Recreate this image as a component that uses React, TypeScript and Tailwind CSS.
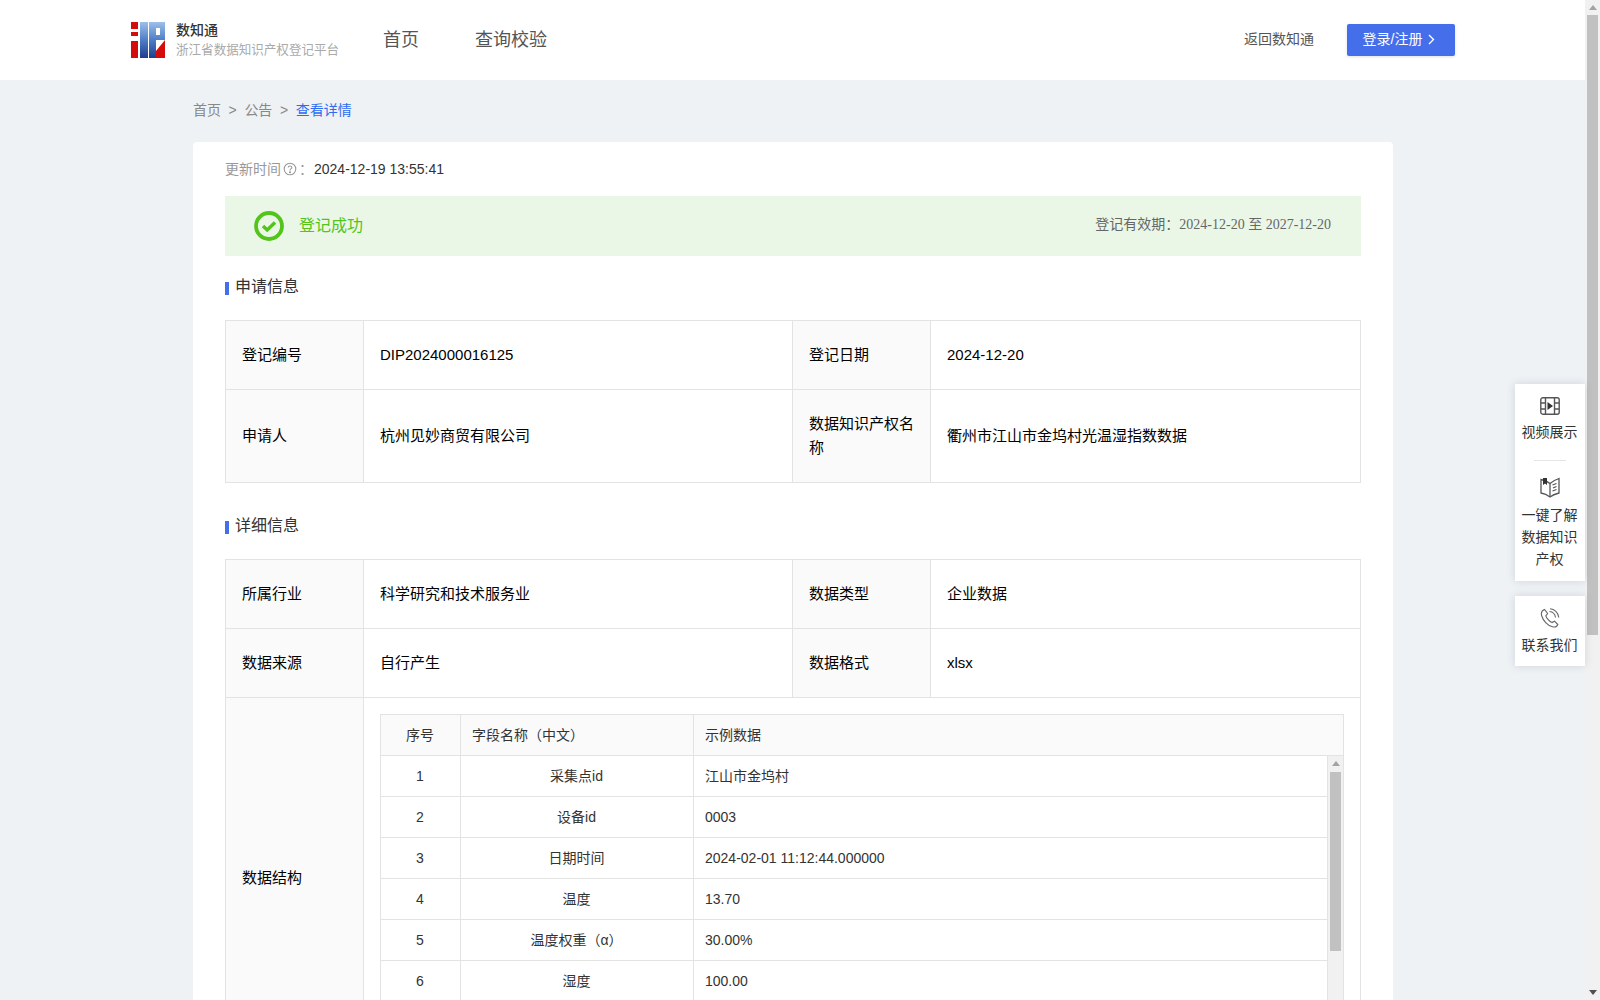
import React from "react";

const font = { fontFamily: '"Liberation Sans", "Noto Sans CJK SC", sans-serif' };

function Logo() {
  return (
    <svg width="34" height="36" viewBox="0 0 34 36" className="shrink-0">
      <defs>
        <linearGradient id="lg" x1="0" y1="0" x2="0" y2="1">
          <stop offset="0" stopColor="#9dc0ea" />
          <stop offset="0.5" stopColor="#4f7ec6" />
          <stop offset="1" stopColor="#1f3d8c" />
        </linearGradient>
      </defs>
      <rect x="0" y="0" width="7" height="7" fill="#d40c0c" />
      <rect x="0" y="10" width="7" height="4" fill="#d40c0c" />
      <rect x="0" y="19" width="7" height="17" fill="#d40c0c" />
      <rect x="9" y="0" width="8" height="36" fill="url(#lg)" />
      <path d="M18 0 H34 V18 H25 V36 H18 Z" fill="url(#lg)" />
      <rect x="25" y="6" width="4" height="7" fill="#fff" />
      <path d="M25 36 V29 L34 18 V36 Z" fill="#d40c0c" />
    </svg>
  );
}

function SectionTitle({ children, className = "" }: { children: React.ReactNode; className?: string }) {
  return (
    <div className={`flex items-center gap-[6px] h-5 text-[16px] text-[#333] ${className}`}>
      <span className="w-1 h-[13px] mt-[3px] bg-[#456eeb]" />
      <span>{children}</span>
    </div>
  );
}

const labelCls = "bg-[#fafafa] border border-[#e3e3e3] px-4 py-0 text-[15px] text-black leading-6 font-normal text-left align-middle";
const valueCls = "bg-white border border-[#e3e3e3] px-4 py-0 text-[15px] text-black leading-6 font-normal text-left align-middle";

function OuterCols() {
  return (
    <colgroup>
      <col className="w-[138px]" />
      <col className="w-[429px]" />
      <col className="w-[138px]" />
      <col />
    </colgroup>
  );
}

const rows: [string, string, string][] = [
  ["1", "采集点id", "江山市金坞村"],
  ["2", "设备id", "0003"],
  ["3", "日期时间", "2024-02-01 11:12:44.000000"],
  ["4", "温度", "13.70"],
  ["5", "温度权重（α）", "30.00%"],
  ["6", "湿度", "100.00"],
];

function InnerTable() {
  return (
    <div className="border border-[#e3e3e3] border-b-0 text-[14px] text-[#333]">
      <div className="flex h-[41px] bg-[#fafafa] border-b border-[#e3e3e3]">
        <div className="w-[80px] shrink-0 border-r border-[#e3e3e3] flex items-center justify-center pr-[1px]">序号</div>
        <div className="w-[233px] shrink-0 border-r border-[#e3e3e3] flex items-center px-[11px]">字段名称（中文）</div>
        <div className="flex-1 flex items-center px-[11px]">示例数据</div>
      </div>
      <div className="flex h-[286px] overflow-hidden">
        <div className="flex-1 min-w-0 border-r border-[#e3e3e3]">
          {rows.map((r) => (
            <div key={r[0]} className="flex h-[41px] border-b border-[#e3e3e3]">
              <div className="w-[80px] shrink-0 border-r border-[#e3e3e3] flex items-center justify-center pr-[1px]">{r[0]}</div>
              <div className="w-[233px] shrink-0 border-r border-[#e3e3e3] flex items-center justify-center pr-[1px]">{r[1]}</div>
              <div className="flex-1 flex items-center px-[11px]">{r[2]}</div>
            </div>
          ))}
        </div>
        <Scrollbar thumbTop="mt-[1px]" thumbH="h-[179px]" width="w-[15px]" thumbInset="mx-[2px]" />
      </div>
    </div>
  );
}

function Scrollbar({ thumbTop, thumbH, width, thumbInset }: { thumbTop: string; thumbH: string; width: string; thumbInset: string }) {
  return (
    <div className={`${width} shrink-0 bg-[#f1f1f1] flex flex-col items-center`}>
      <div className="h-[15px] w-full flex items-center justify-center shrink-0">
        <svg width="8" height="5" viewBox="0 0 8 5"><path d="M4 0 L8 5 H0 Z" fill="#a3a3a3" /></svg>
      </div>
      <div className={`${thumbH} ${thumbTop} self-stretch ${thumbInset} bg-[#c1c1c1]`} />
    </div>
  );
}

function SidePanel() {
  const cardCls = "w-[70px] bg-white shadow-[0_0_8px_rgba(70,80,100,0.18)] flex flex-col items-center text-[14px] leading-[22px] text-[#333] text-center pr-[1px]";
  return (
    <div className="absolute right-[15px] top-[384px] flex flex-col gap-[15px]">
      <div className={`${cardCls} pt-[13px] pb-[11px]`}>
        <svg width="20" height="18" viewBox="0 0 20 18" fill="none" stroke="#555" strokeWidth="1.4">
          <rect x="0.8" y="0.8" width="18.4" height="16.4" rx="2" />
          <path d="M5.5 1V17M14.5 1V17M1 6H5.5M1 12H5.5M14.5 6H19M14.5 12H19" />
          <path d="M7.5 5 L13 9 L7.5 13 Z" fill="#333" stroke="none" />
        </svg>
        <div className="mt-[6px]">视频展示</div>
        <div className="w-8 h-px bg-[#e5e5e5] mt-[17px]" />
        <svg className="mt-[16px]" width="20" height="21" viewBox="0 0 20 21" fill="none" stroke="#555" strokeWidth="1.3">
          <path d="M1 2.5 C4 3 7 4 10 6.5 C13 4 16 2.5 19 1.5 V16 C15 17 12.5 18 10 20 C7.5 18 4.5 16.5 1 16 Z" />
          <path d="M10 6.5V20" />
          <path d="M3 1 H7 V8 L5 6.4 L3 8 Z" fill="#333" stroke="none" />
          <path d="M12.5 8 L16.5 6.5M13 11 L16.5 9.5M12.5 14 L16.5 12.5" />
        </svg>
        <div className="mt-[6px] px-1">一键了解数据知识产权</div>
      </div>
      <div className={`${cardCls} pt-[12px] pb-[10px]`}>
        <svg width="20" height="20" viewBox="0 0 20 20" fill="none" stroke="#666" strokeWidth="1.1">
          <path d="M4.5 1.5 C2 2.5 0.8 4.5 1.6 7.5 C3 12.5 7.5 17.5 12.5 18.8 C15 19.4 17 18.5 17.8 16.5 L14.5 13.2 L12 14.6 C9.5 13.5 6.5 10 5.8 7.8 L7.6 5.5 Z" />
          <path d="M9.5 3.5 C12.5 3.8 15 6 15.5 9.5M10 0.8 C14.5 1 18.2 4.5 18.8 9.5" />
        </svg>
        <div className="mt-[6px]">联系我们</div>
      </div>
    </div>
  );
}

export default function App() {
  return (
    <div className="relative flex h-screen w-full overflow-hidden bg-[#eef2f5]" style={font}>
      <div className="flex-1 min-w-0 h-full overflow-hidden">
        <header className="h-20 bg-white flex items-center pl-[131px] pr-[130px]">
          <Logo />
          <div className="ml-[11px] w-[204px] shrink-0">
            <div className="text-[14px] leading-5 font-medium text-[#333]">数知通</div>
            <div className="text-[12.55px] leading-[21px] text-[#aaa] whitespace-nowrap">浙江省数据知识产权登记平台</div>
          </div>
          <nav className="ml-[3px] flex items-center gap-[20px] text-[18px] text-[#555]">
            <span className="w-[72px]">首页</span>
            <span>查询校验</span>
          </nav>
          <div className="flex-1" />
          <span className="text-[14px] text-[#555] pb-[1px]">返回数知通</span>
          <button className="ml-[33px] w-[108px] h-8 rounded-[2px] bg-[#456eeb] text-white text-[14px] flex items-center justify-center gap-[6px] pr-1 pb-[1px] shadow-[0_1px_3px_rgba(0,0,0,0.12)]">
            登录/注册
            <svg width="7" height="11" viewBox="0 0 7 11" fill="none" stroke="#fff" strokeWidth="1.4"><path d="M1 1 L5.5 5.5 L1 10" /></svg>
          </button>
        </header>

        <main className="w-[1200px] ml-[193px]">
          <div className="h-[62px] flex items-center gap-[7.6px] pb-[1px] text-[14px] text-[#888]">
            <span>首页</span><span>&gt;</span><span>公告</span><span>&gt;</span><span className="text-[#2f6bf2]">查看详情</span>
          </div>
          <div className="bg-white rounded-t-[4px] px-8 pt-[17px] pb-10">
            <div className="flex items-center h-[20px] text-[14px] text-[#999]">
              <span>更新时间</span>
              <svg className="mx-[2px]" width="14" height="14" viewBox="0 0 14 14" fill="none" stroke="#999" strokeWidth="1.1">
                <circle cx="7" cy="7" r="5.8" />
                <path d="M5.2 5.6 C5.2 3.4 8.8 3.4 8.8 5.5 C8.8 6.9 7 6.9 7 8.4" />
                <circle cx="7" cy="10.2" r="0.5" fill="#999" />
              </svg>
              <span>：</span>
              <span className="text-[#333] ml-[1px]">2024-12-19 13:55:41</span>
            </div>
            <div className="mt-[17px] h-[60px] bg-[#ebf7e6] flex items-center pl-[29px] pr-[29px]">
              <svg width="30" height="30" viewBox="0 0 30 30" fill="none" stroke="#52c41a">
                <circle cx="15" cy="15" r="13" strokeWidth="3.8" />
                <path d="M9 15 L13.2 19 L21 11.5" strokeWidth="3.4" />
              </svg>
              <span className="ml-[15px] text-[16px] text-[#52c41a]">登记成功</span>
              <div className="flex-1" />
              <span className="text-[14px] text-[#666] pb-[3px] pr-[1px]">登记有效期：<span style={{ fontFamily: '"Liberation Serif", "Noto Sans CJK SC", serif' }}>2024-12-20 至 2027-12-20</span></span>
            </div>

            <SectionTitle className="mt-[21px]">申请信息</SectionTitle>
            <table className="mt-[23px] w-full table-fixed border-collapse">
              <OuterCols />
              <tbody>
                <tr className="h-[69px]">
                  <th className={labelCls}>登记编号</th>
                  <td className={valueCls}>DIP2024000016125</td>
                  <th className={labelCls}>登记日期</th>
                  <td className={valueCls}>2024-12-20</td>
                </tr>
                <tr className="h-[93px]">
                  <th className={labelCls}>申请人</th>
                  <td className={valueCls}>杭州见妙商贸有限公司</td>
                  <th className={labelCls}>数据知识产权名称</th>
                  <td className={valueCls}>衢州市江山市金坞村光温湿指数数据</td>
                </tr>
              </tbody>
            </table>

            <SectionTitle className="mt-[33px]">详细信息</SectionTitle>
            <table className="mt-[23px] w-full table-fixed border-collapse">
              <OuterCols />
              <tbody>
                <tr className="h-[69px]">
                  <th className={labelCls}>所属行业</th>
                  <td className={valueCls}>科学研究和技术服务业</td>
                  <th className={labelCls}>数据类型</th>
                  <td className={valueCls}>企业数据</td>
                </tr>
                <tr className="h-[69px]">
                  <th className={labelCls}>数据来源</th>
                  <td className={valueCls}>自行产生</td>
                  <th className={labelCls}>数据格式</th>
                  <td className={valueCls}>xlsx</td>
                </tr>
                <tr>
                  <th className={labelCls}>数据结构</th>
                  <td colSpan={3} className="bg-white border border-[#e3e3e3] p-4">
                    <InnerTable />
                  </td>
                </tr>
              </tbody>
            </table>
          </div>
        </main>
      </div>

      <div className="w-[15px] shrink-0 h-full bg-[#f1f1f1] flex flex-col">
        <Scrollbar thumbTop="mt-0" thumbH="h-[620px]" width="w-full" thumbInset="mx-[2px]" />
        <div className="flex-1" />
        <div className="h-[15px] flex items-center justify-center">
          <svg width="8" height="5" viewBox="0 0 8 5"><path d="M0 0 H8 L4 5 Z" fill="#505050" /></svg>
        </div>
      </div>
      <SidePanel />
    </div>
  );
}
